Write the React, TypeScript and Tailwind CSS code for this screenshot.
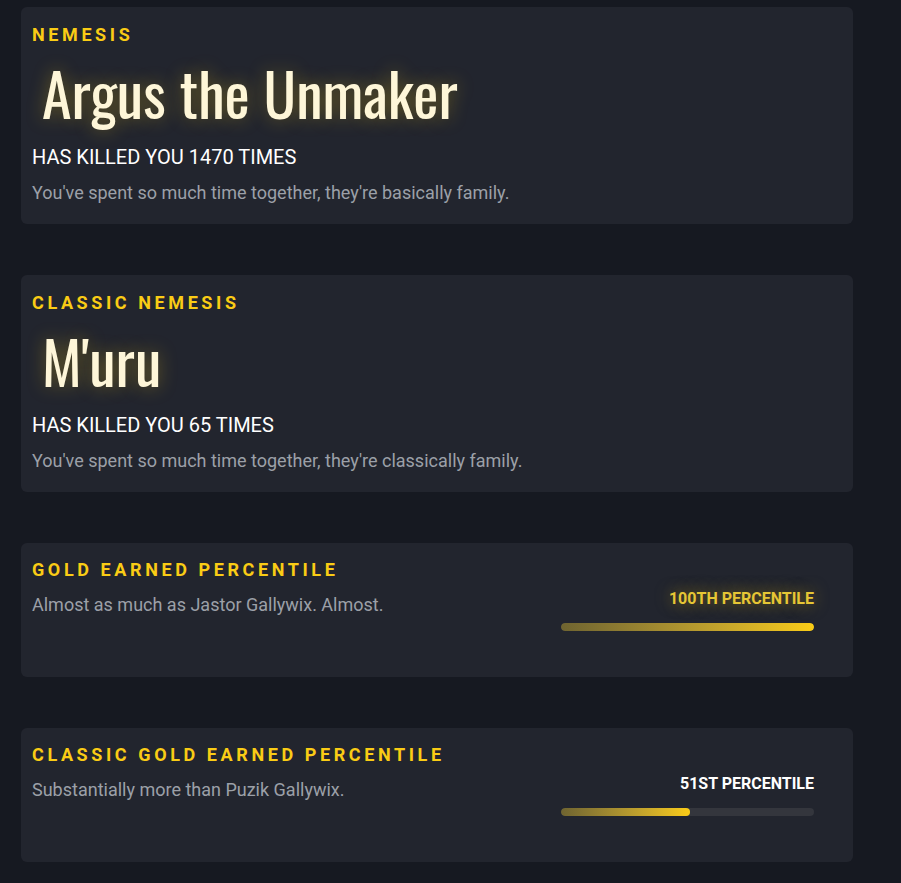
const nameFont = {
  fontFamily: '"Oswald", "Liberation Sans Narrow", "DejaVu Sans Condensed", sans-serif',
};

function NemesisCard({
  label,
  name,
  kills,
  blurb,
}: {
  label: string;
  name: string;
  kills: number;
  blurb: string;
}) {
  return (
    <div className="rounded-md bg-[#22252e] px-[11px] pt-[18px] pb-[19px]">
      <div className="text-[18px] leading-[20px] font-bold tracking-[0.2em] text-[#facc15]">
        {label}
      </div>
      <div
        className="mt-[19px] px-[10px] text-[60px] leading-[56px] text-[#fef6d8] [text-shadow:0_0_18px_rgba(250,204,21,0.35)]"
        style={nameFont}
      >
        {name}
      </div>
      <div className="mt-[25px] text-[20px] leading-[24px] text-white">
        HAS KILLED YOU {kills} TIMES
      </div>
      <div className="mt-[12px] text-[18px] leading-[24px] text-[#9ca0a8]">{blurb}</div>
    </div>
  );
}

function PercentileCard({
  label,
  blurb,
  percent,
  rank,
  glow,
}: {
  label: string;
  blurb: string;
  percent: number;
  rank: string;
  glow?: boolean;
}) {
  return (
    <div className="flex h-[134px] justify-between rounded-md bg-[#22252e] pt-[17px] pr-[39px] pl-[11px]">
      <div>
        <div className="text-[18px] leading-[20px] font-bold tracking-[0.2em] text-[#facc15]">
          {label}
        </div>
        <div className="mt-[13px] text-[18px] leading-[24px] text-[#9ca0a8]">{blurb}</div>
      </div>
      <div className="flex w-[253px] flex-col items-end pt-[29px]">
        <div
          className={
            glow
              ? "text-[16px] leading-[20px] font-bold text-[#e6c635] [text-shadow:0_0_16px_rgba(250,204,21,0.5)]"
              : "text-[16px] leading-[20px] font-bold text-white"
          }
        >
          {rank}
        </div>
        <div className="mt-[14px] h-[8px] w-full overflow-hidden rounded-full bg-[#34363d]">
          <div
            className="h-full rounded-full bg-gradient-to-r from-[#6f6430] to-[#facc15]"
            style={{ width: `${percent}%` }}
          />
        </div>
      </div>
    </div>
  );
}

export default function App() {
  return (
    <div
      className="min-h-[883px] bg-[#161921] pt-[7px] pl-[21px]"
      style={{ fontFamily: 'Roboto, "Noto Sans", sans-serif' }}
    >
      <div className="flex w-[832px] flex-col gap-[51px]">
        <NemesisCard
          label="NEMESIS"
          name="Argus the Unmaker"
          kills={1470}
          blurb="You've spent so much time together, they're basically family."
        />
        <NemesisCard
          label="CLASSIC NEMESIS"
          name="M'uru"
          kills={65}
          blurb="You've spent so much time together, they're classically family."
        />
        <PercentileCard
          label="GOLD EARNED PERCENTILE"
          blurb="Almost as much as Jastor Gallywix. Almost."
          percent={100}
          rank="100TH PERCENTILE"
          glow
        />
        <PercentileCard
          label="CLASSIC GOLD EARNED PERCENTILE"
          blurb="Substantially more than Puzik Gallywix."
          percent={51}
          rank="51ST PERCENTILE"
        />
      </div>
    </div>
  );
}
